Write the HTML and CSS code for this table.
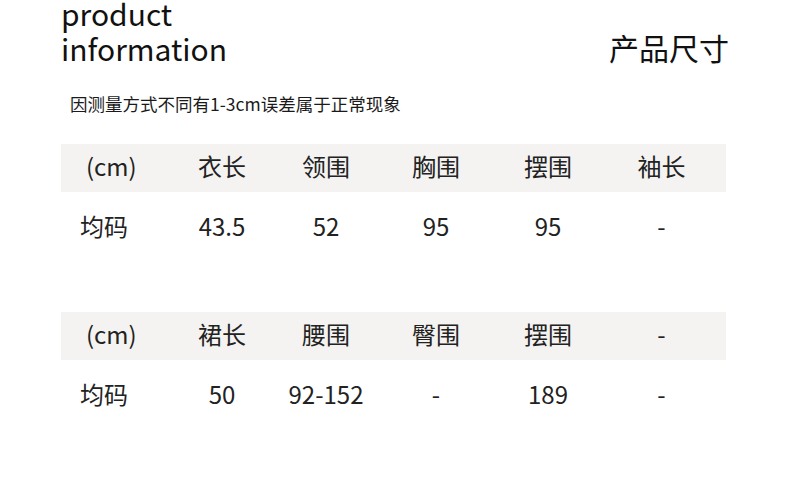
FILE: index.html
```html
<!DOCTYPE html>
<html lang="zh-CN">
<head>
<meta charset="utf-8">
<title>product information</title>
<link rel="stylesheet" href="styles.css">
</head>
<body>
<div class="page">
  <header class="head">
    <h1 class="title">product<br>information</h1>
    <div class="cn-title">产品尺寸</div>
  </header>
  <p class="note">因测量方式不同有1-3cm误差属于正常现象</p>

  <div class="table">
    <div class="row row-head">
      <div class="cell first unit">(cm)</div>
      <div class="cell">衣长</div>
      <div class="cell">领围</div>
      <div class="cell">胸围</div>
      <div class="cell">摆围</div>
      <div class="cell">袖长</div>
    </div>
    <div class="row row-data">
      <div class="cell first">均码</div>
      <div class="cell">43.5</div>
      <div class="cell">52</div>
      <div class="cell">95</div>
      <div class="cell">95</div>
      <div class="cell">-</div>
    </div>
  </div>

  <div class="table table-second">
    <div class="row row-head">
      <div class="cell first unit">(cm)</div>
      <div class="cell">裙长</div>
      <div class="cell">腰围</div>
      <div class="cell">臀围</div>
      <div class="cell">摆围</div>
      <div class="cell">-</div>
    </div>
    <div class="row row-data">
      <div class="cell first">均码</div>
      <div class="cell">50</div>
      <div class="cell">92-152</div>
      <div class="cell">-</div>
      <div class="cell">189</div>
      <div class="cell">-</div>
    </div>
  </div>
</div>
</body>
</html>
```

FILE: styles.css
```css
html, body {
  margin: 0;
  padding: 0;
  background: #ffffff;
}

body {
  font-family: "Noto Sans CJK SC", "Noto Sans", sans-serif;
  color: #222222;
}

.page {
  width: 665px;
  padding-left: 61px;
}

.head {
  display: flex;
  justify-content: space-between;
  align-items: flex-end;
  margin-top: -4px;
}

.title {
  margin: 0;
  font-size: 30px;
  font-weight: 400;
  line-height: 35px;
  color: #111111;
}

.cn-title {
  font-size: 30px;
  line-height: 37px;
  margin-right: -3px;
  color: #111111;
}

.note {
  margin: 26px 0 0 9px;
  font-size: 17.5px;
  line-height: 24px;
  color: #1a1a1a;
}

.table {
  margin-top: 28px;
}

.table-second {
  margin-top: 48px;
}

.row {
  display: grid;
  grid-template-columns: 104px 114px 94px 126px 98px 129px;
  font-size: 24px;
  text-align: center;
}

.row-head {
  background: #f4f3f1;
  height: 48px;
  line-height: 44px;
  padding-bottom: 4px;
  box-sizing: border-box;
}

.row-data {
  height: 72px;
  line-height: 68px;
  padding-bottom: 4px;
  box-sizing: border-box;
}

.cell {
  white-space: nowrap;
}

.cell.first {
  text-align: left;
  padding-left: 19px;
}

.cell.unit {
  padding-left: 25px;
}
```
